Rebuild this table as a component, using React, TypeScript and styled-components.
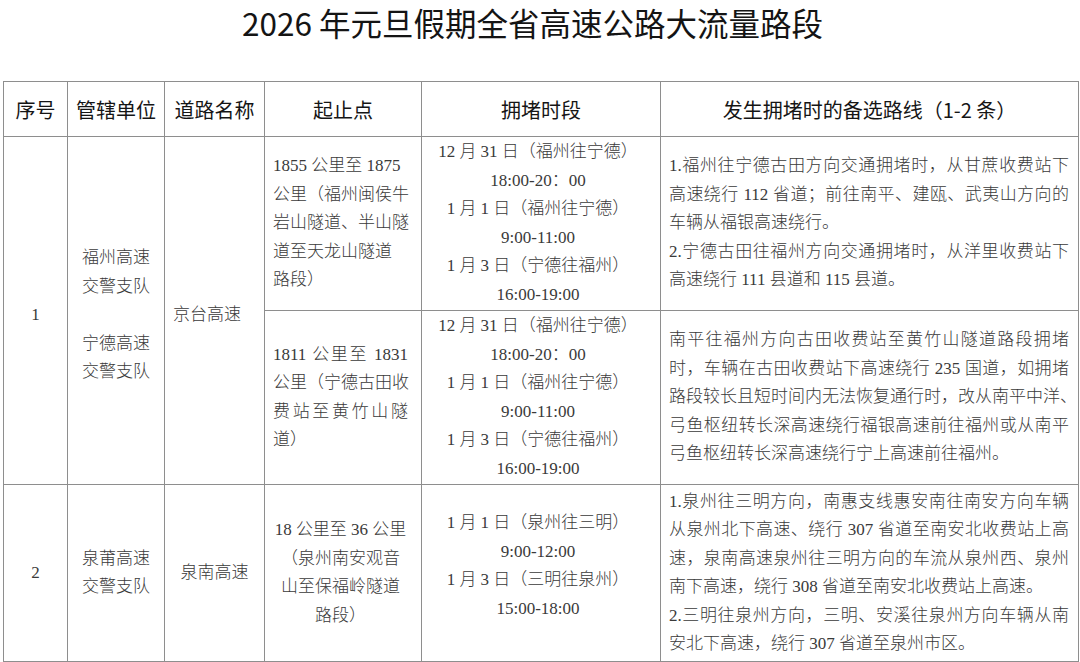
import { FunctionComponent } from "react";
import styled, { createGlobalStyle } from "styled-components";

const GlobalStyle = createGlobalStyle`
  html, body {
    margin: 0;
    padding: 0;
    background: #ffffff;
  }
  body {
    font-family: "Noto Sans CJK SC", "Noto Sans", sans-serif;
    color: #222;
  }
`;

const Page = styled.div`
  width: 1080px;
  height: 662px;
  overflow: hidden;
  background: #fff;
`;

const Title = styled.h1`
  margin: 0 0 37px;
  padding-right: 15px;
  height: 44px;
  line-height: 44px;
  text-align: center;
  font-family: "Noto Sans CJK SC", sans-serif;
  font-size: 31.5px;
  font-weight: 400;
  color: #141414;
`;

const Table = styled.table`
  margin-left: 3px;
  width: 1075px;
  table-layout: fixed;
  border-collapse: collapse;
  border: 1px solid #8e8e8e;
`;

const HeadCell = styled.th`
  height: 54px;
  padding: 0;
  border: 1px solid #8e8e8e;
  font-family: "Noto Sans CJK SC", sans-serif;
  font-size: 20px;
  font-weight: 400;
  color: #151515;
  text-align: center;
  vertical-align: middle;
  white-space: nowrap;
`;

type Align = "left" | "center";

const Cell = styled.td<{ $align?: Align; $pad?: string; $h?: number }>`
  height: ${(p) => (p.$h ? `${p.$h}px` : "auto")};
  padding: ${(p) => p.$pad ?? "0"};
  border: 1px solid #8e8e8e;
  font-family: "Liberation Serif", "Noto Sans CJK SC", serif;
  font-size: 17px;
  font-weight: 300;
  line-height: 28.5px;
  color: #3a3a3a;
  text-align: ${(p) => (p.$align === "center" ? "center" : "left")};
  vertical-align: middle;
  white-space: nowrap;
`;

const Line = styled.span<{ $fill?: boolean }>`
  display: block;
  min-height: 28.5px;
  text-align: ${(p) => (p.$fill ? "justify" : "inherit")};
  text-align-last: ${(p) => (p.$fill ? "justify" : "auto")};
`;

type Row = { text: string; fill?: boolean };

const Lines: FunctionComponent<{ rows: Row[] }> = ({ rows }) => (
  <>
    {rows.map((r, i) => (
      <Line key={i} $fill={r.fill}>
        {r.text || "\u00a0"}
      </Line>
    ))}
  </>
);

const plain = (...t: string[]): Row[] => t.map((text) => ({ text }));

const fujianTimes = plain(
  "12 月 31 日（福州往宁德）",
  "18:00-20：00",
  "1 月 1 日（福州往宁德）",
  "9:00-11:00",
  "1 月 3 日（宁德往福州）",
  "16:00-19:00"
);

const POINT_PAD = "0 13px 0 8px";
const TIME_PAD = "0 8px 0 2px";
const ROUTE_PAD = "0 9px 0 8px";

const App: FunctionComponent = () => (
  <Page lang="zh-CN">
    <GlobalStyle />
    <Title>2026 年元旦假期全省高速公路大流量路段</Title>
    <Table>
      <colgroup>
        <col style={{ width: 64 }} />
        <col style={{ width: 97 }} />
        <col style={{ width: 100 }} />
        <col style={{ width: 157 }} />
        <col style={{ width: 239 }} />
        <col style={{ width: 418 }} />
      </colgroup>
      <thead>
        <tr>
          <HeadCell>序号</HeadCell>
          <HeadCell>管辖单位</HeadCell>
          <HeadCell>道路名称</HeadCell>
          <HeadCell>起止点</HeadCell>
          <HeadCell>拥堵时段</HeadCell>
          <HeadCell>发生拥堵时的备选路线（1-2 条）</HeadCell>
        </tr>
      </thead>
      <tbody>
        <tr>
          <Cell rowSpan={2} $align="center" $pad="10px 0 0">
            1
          </Cell>
          <Cell rowSpan={2} $align="center" $pad="10px 0 0">
            <Lines
              rows={plain("福州高速", "交警支队", "", "宁德高速", "交警支队")}
            />
          </Cell>
          <Cell rowSpan={2} $pad="10px 8px 0 8px">
            京台高速
          </Cell>
          <Cell $h={173} $pad={POINT_PAD}>
            <Lines
              rows={plain(
                "1855 公里至 1875",
                "公里（福州闽侯牛",
                "岩山隧道、半山隧",
                "道至天龙山隧道",
                "路段）"
              )}
            />
          </Cell>
          <Cell $align="center" $pad={TIME_PAD}>
            <Lines rows={fujianTimes} />
          </Cell>
          <Cell $pad={ROUTE_PAD}>
            <Lines
              rows={[
                { text: "1.福州往宁德古田方向交通拥堵时，从甘蔗收费站下", fill: true },
                { text: "高速绕行 112 省道；前往南平、建瓯、武夷山方向的", fill: true },
                { text: "车辆从福银高速绕行。" },
                { text: "2.宁德古田往福州方向交通拥堵时，从洋里收费站下", fill: true },
                { text: "高速绕行 111 县道和 115 县道。" },
              ]}
            />
          </Cell>
        </tr>
        <tr>
          <Cell $h={173} $pad={POINT_PAD}>
            <Lines
              rows={[
                { text: "1811 公里至 1831", fill: true },
                { text: "公里（宁德古田收", fill: true },
                { text: "费站至黄竹山隧", fill: true },
                { text: "道）" },
              ]}
            />
          </Cell>
          <Cell $align="center" $pad={TIME_PAD}>
            <Lines rows={fujianTimes} />
          </Cell>
          <Cell $pad={ROUTE_PAD}>
            <Lines
              rows={[
                { text: "南平往福州方向古田收费站至黄竹山隧道路段拥堵", fill: true },
                { text: "时，车辆在古田收费站下高速绕行 235 国道，如拥堵", fill: true },
                { text: "路段较长且短时间内无法恢复通行时，改从南平中洋、", fill: true },
                { text: "弓鱼枢纽转长深高速绕行福银高速前往福州或从南平", fill: true },
                { text: "弓鱼枢纽转长深高速绕行宁上高速前往福州。" },
              ]}
            />
          </Cell>
        </tr>
        <tr>
          <Cell $align="center" $h={176}>
            2
          </Cell>
          <Cell $align="center">
            <Lines rows={plain("泉莆高速", "交警支队")} />
          </Cell>
          <Cell $align="center">泉南高速</Cell>
          <Cell $align="center" $pad={POINT_PAD}>
            <Lines
              rows={plain(
                "18 公里至 36 公里",
                "（泉州南安观音",
                "山至保福岭隧道",
                "路段）"
              )}
            />
          </Cell>
          <Cell $align="center" $pad="0 8px 14px 2px">
            <Lines
              rows={plain(
                "1 月 1 日（泉州往三明）",
                "9:00-12:00",
                "1 月 3 日（三明往泉州）",
                "15:00-18:00"
              )}
            />
          </Cell>
          <Cell $pad={ROUTE_PAD}>
            <Lines
              rows={[
                { text: "1.泉州往三明方向，南惠支线惠安南往南安方向车辆", fill: true },
                { text: "从泉州北下高速、绕行 307 省道至南安北收费站上高", fill: true },
                { text: "速，泉南高速泉州往三明方向的车流从泉州西、泉州", fill: true },
                { text: "南下高速，绕行 308 省道至南安北收费站上高速。" },
                { text: "2.三明往泉州方向，三明、安溪往泉州方向车辆从南", fill: true },
                { text: "安北下高速，绕行 307 省道至泉州市区。" },
              ]}
            />
          </Cell>
        </tr>
      </tbody>
    </Table>
  </Page>
);

export default App;
